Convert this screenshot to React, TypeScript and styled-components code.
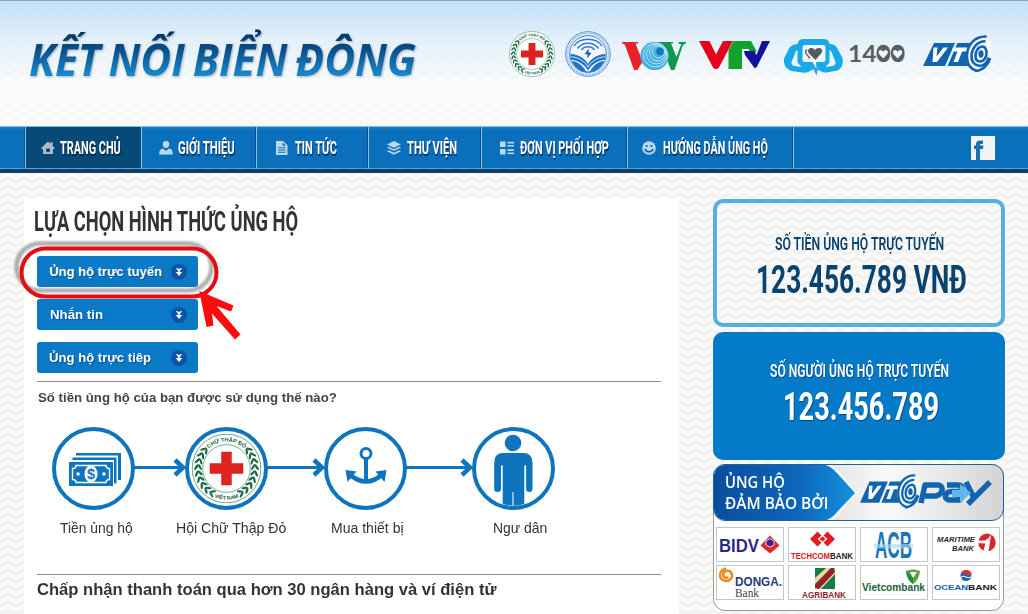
import React, { useLayoutEffect, useRef, useState } from "react";
import styled, { createGlobalStyle, css } from "styled-components";

const GlobalStyle = createGlobalStyle`
  * { box-sizing: border-box; }
  body { margin: 0; background: #f8f8f7; font-family: "Liberation Sans", Arial, sans-serif; color: #333; }
  svg { display: block; flex: none; }
`;

const FitBox = styled.span<{ $w: number; $ml?: number }>`
  display: block;
  flex: none;
  width: ${(p) => p.$w}px;
  margin-left: ${(p) => p.$ml ?? 0}px;
  white-space: nowrap;
`;
const FitInner = styled.span`
  display: inline-block;
  transform-origin: 0 50%;
`;
function Fit({ w, ml, children }: { w: number; ml?: number; children: string }) {
  const ref = useRef<HTMLSpanElement>(null);
  const [k, setK] = useState(1);
  useLayoutEffect(() => {
    if (ref.current) setK(w / ref.current.offsetWidth);
  }, [w]);
  return (
    <FitBox $w={w} $ml={ml}>
      <FitInner ref={ref} style={{ transform: `scaleX(${k})` }}>{children}</FitInner>
    </FitBox>
  );
}

const display = css`
  font-family: Roboto, "Liberation Sans", sans-serif;
  font-weight: 700;
`;

/* ---------- page ---------- */
const Page = styled.div`
  position: relative;
  width: 1028px;
  height: 614px;
  overflow: hidden;
  background: #f9f9f8;
`;
const Waves = styled.svg`
  position: absolute;
  inset: 0;
`;
const Header = styled.header`
  position: relative;
  height: 126px;
  border-top: 1px solid #8fa3b2;
  background: linear-gradient(rgba(188, 221, 246, 0.9), rgba(222, 239, 251, 0.75) 40px, rgba(250, 252, 254, 0.5) 80px, rgba(255, 255, 255, 0.45));
  display: flex;
`;
const SiteTitle = styled.h1`
  margin: 15px 0 0 29px;
  width: 400px;
  height: 86px;
  font: italic 700 45px/86px "Open Sans", "Noto Sans", sans-serif;
  word-spacing: -3px;
  filter: drop-shadow(1px 1px 1px rgba(60, 80, 100, 0.4));
  ${FitInner} {
    background: linear-gradient(#06305c 14px, #0a4f8c 34px, #1a8fd2 62px);
    -webkit-background-clip: text;
    background-clip: text;
    color: transparent;
  }
`;
const Partners = styled.div`
  display: flex;
  align-items: flex-start;
  padding: 30px 0 0 80px;
`;
const Slot = styled.div<{ $ml: number; $mt: number }>`
  margin: ${(p) => p.$mt}px 0 0 ${(p) => p.$ml}px;
`;

/* ---------- navigation ---------- */
const Nav = styled.nav`
  position: relative;
  height: 47px;
  padding-left: 25px;
  display: flex;
  border-top: 1px solid #7fbce4;
  border-bottom: 4px solid #123f66;
  background: linear-gradient(#1a80c8, #0b70bb 3px, #0b70bb);
  box-shadow: inset 0 -1px 0 #5a9dcd;
`;
const NavItem = styled.a<{ $w: number; $pad: number; $active?: boolean }>`
  width: ${(p) => p.$w}px;
  height: 41px;
  padding-left: ${(p) => p.$pad}px;
  display: flex;
  align-items: center;
  border-left: 1px solid #8cc0e4;
  box-shadow: -1px 0 0 #0b4f87;
  background: ${(p) => (p.$active ? "#074a78" : "transparent")};
  ${display}
  font-size: 18px;
  line-height: 41px;
  color: #fff;
  fill: ${(p) => (p.$active ? "#a3bccd" : "#b9d7ee")};
  text-shadow: 1px 2px 1px rgba(0, 25, 60, 0.75);
`;
const NavEnd = styled.div`
  flex: 1;
  height: 41px;
  border-left: 1px solid #8cc0e4;
  box-shadow: -1px 0 0 #0b4f87;
  padding: 9px 33px 0 0;
  display: flex;
  justify-content: flex-end;
`;
const NavIcon = ({ name }: { name: string }) => (
  <svg width="14" height="14" viewBox="0 0 14 14">
    {name === "home" && (
      <>
        <path d="M0 7.200 7 .600l2.300 2.100V1.200h2.400v3.700L14 7.200l-1 .9h-1V13H2V8.100H1z" />
        <path d="M5.200 7.600h3.600v3.200H5.200z" fill="#16354f" />
      </>
    )}
    {name === "user" && <path d="M7 0a3.200 3.200 0 0 1 3.200 3.400C10.200 5.300 8.900 7 7 7S3.800 5.300 3.800 3.400A3.200 3.200 0 0 1 7 0M.3 13.600C0 9.500 1.500 7.900 4 7.500L7 10l3-2.500c2.500.4 4 2 3.700 6.100z" />}
    {name === "file" && <path fillRule="evenodd" d="M1 0h7l4.500 4.200V14H1zM7.500 1.500v3.200H11zM3 6.300v1h7.500v-1zm0 2.200v1h7.500v-1zm0 2.200v1h7.500v-1z" />}
    {name === "stack" && <path d="M7 0l7 3.400-7 3.400-7-3.400zM0 6.600l1.800-.9L7 8.200l5.200-2.500 1.800.9L7 10.100zM0 10.200l1.800-.9L7 11.800l5.200-2.500 1.800.9L7 13.700z" />}
    {name === "list" && <path d="M0 .5h5.500V6H0zM0 8h5.500v5.500H0zM7.500.8H14v1.600H7.500zm0 3.200H14v1.600H7.500zm0 4.300H14v1.600H7.500zm0 3.200H14v1.600H7.500z" />}
    {name === "smile" && (
      <>
        <circle cx="7" cy="7" r="6.800" />
        <circle cx="4.700" cy="5" r="1.100" fill="#0b5d9f" />
        <circle cx="9.300" cy="5" r="1.100" fill="#0b5d9f" />
        <path d="M3 8c1.200 3.800 6.800 3.800 8 0" fill="none" stroke="#0b5d9f" strokeWidth="1.500" />
      </>
    )}
  </svg>
);
const navItems = [
  { t: "TRANG CHỦ", icon: "home", w: 116, pad: 15, gap: 5, tw: 61 },
  { t: "GIỚI THIỆU", icon: "user", w: 115, pad: 17, gap: 5, tw: 57 },
  { t: "TIN TỨC", icon: "file", w: 112, pad: 18, gap: 6, tw: 42 },
  { t: "THƯ VIỆN", icon: "stack", w: 113, pad: 18, gap: 6, tw: 50 },
  { t: "ĐƠN VỊ PHỐI HỢP", icon: "list", w: 146, pad: 18, gap: 6, tw: 89 },
  { t: "HƯỚNG DẪN ỦNG HỘ", icon: "smile", w: 166, pad: 14, gap: 7, tw: 105 },
];

/* ---------- columns ---------- */
const Body = styled.div`
  position: relative;
  display: flex;
  align-items: flex-start;
  padding: 26px 0 0 24px;
`;
const Main = styled.main`
  position: relative;
  width: 655px;
  height: 415px;
  padding: 0 18px 0 13px;
  background: #fff;
`;
const Heading = styled.h2`
  margin: 0 0 0 -3px;
  padding-top: 3px;
  height: 57px;
  ${display}
  font-size: 27.500px;
  line-height: 40px;
  color: #333;
`;
const Choices = styled.div`
  display: flex;
  flex-direction: column;
  gap: 12px;
`;
const Choice = styled.button`
  width: 161px;
  height: 31px;
  padding: 0 11px 0 12px;
  border: 0;
  border-radius: 3px;
  background: #0a79c6;
  color: #fff;
  font: bold 13px/30px "Liberation Sans", Arial, sans-serif;
  text-shadow: 1px 1px 1px rgba(0, 40, 90, 0.5);
  display: flex;
  align-items: center;
  justify-content: space-between;
`;
const Question = styled.p`
  margin: 8px 0 0;
  padding: 6px 0 0 1px;
  height: 46px;
  border-top: 1px solid #8b8b8b;
  font: bold 13px/20px "Liberation Sans", Arial, sans-serif;
  color: #444;
`;
const Flow = styled.div`
  display: flex;
  padding-left: 15px;
`;
const Labels = styled.div`
  display: flex;
  height: 64px;
  padding: 8px 0 0 23px;
  font-size: 15px;
  line-height: 20px;
  color: #333;
`;
const Accept = styled.h3`
  margin: 0;
  padding-top: 4px;
  border-top: 1px solid #8b8b8b;
  font: bold 16px/21px "Liberation Sans", Arial, sans-serif;
  color: #333;
`;
const Annotation = styled.svg`
  position: absolute;
  left: -14px;
  top: 36px;
`;

const Side = styled.aside`
  width: 292px;
  margin-left: 34px;
`;
const Counter = styled.section<{ $solid?: boolean }>`
  height: 128px;
  display: flex;
  flex-direction: column;
  align-items: center;
  border: 4px solid ${(p) => (p.$solid ? "#047ac8" : "#57afe1")};
  border-radius: 10px;
  background: ${(p) => (p.$solid ? "#047ac8" : "transparent")};
  color: ${(p) => (p.$solid ? "#fff" : "#0a4270")};
  margin-bottom: ${(p) => (p.$solid ? 4 : 5)}px;
  padding-top: ${(p) => (p.$solid ? 25 : 31)}px;
  text-shadow: ${(p) => (p.$solid ? "1px 1px 1px rgba(0,35,80,.6)" : "none")};
  ${display}
`;
const CounterLabel = styled.div`
  font-size: 19px;
  font-weight: 600;
  line-height: 20px;
`;
const CounterValue = styled.div<{ $shift: number }>`
  margin-top: 6px;
  padding-left: ${(p) => p.$shift}px;
  font-size: 38.500px;
  line-height: 40px;
`;
const PayPanel = styled.section`
  width: 291px;
  height: 147px;
  border: 1px solid #999;
  border-radius: 12px;
  background: #fff;
`;
const PayHead = styled.div`
  position: relative;
  margin: -1px;
  height: 57px;
  border: 1px solid #1f5fa3;
  border-radius: 12px;
  overflow: hidden;
  background: linear-gradient(90deg, #e9e9ea 45%, #fafafa 60%, #d4d4d6);
`;
const PayArt = styled.svg`
  position: absolute;
  left: -1px;
  top: -1px;
`;
const PayText = styled.div`
  position: relative;
  padding: 7px 0 0 11px;
  font: 600 16px/21px "Open Sans", "Noto Sans", sans-serif;
  color: #fff;
`;
const Banks = styled.div`
  display: grid;
  grid-template-columns: repeat(4, 68px);
  grid-auto-rows: 35px;
  gap: 3px 4px;
  padding: 7px 0 0 2px;
`;
const BankCell = styled.div`
  border: 1px solid #c6c6c6;
  background: #fff;
`;

/* ---------- drawings ---------- */
function RedCross({ size, id }: { size: number; id: string }) {
  const leaves: number[] = [];
  for (let i = 0; i < 9; i++) {
    const a = 52 + i * 12.500;
    leaves.push(a, 360 - a);
  }
  return (
    <svg width={size} height={size} viewBox="-50 -50 100 100">
      <circle r="49" fill="#fff" stroke="#4d9373" strokeWidth="1.200" />
      <circle r="34" fill="none" stroke="#5b9c7f" strokeWidth="1.200" />
      {leaves.map((a) => (
        <g key={a} transform={`rotate(${a}) translate(0,-40.500)`} fill="#1a6b46">
          <ellipse cx="0" cy="-3" rx="5" ry="1.700" transform={`rotate(${a < 180 ? -35 : 35})`} />
          <ellipse cx="0" cy="3" rx="4.500" ry="1.700" transform={`rotate(${a < 180 ? 30 : -30})`} />
        </g>
      ))}
      <path id={id + "t"} d="M-38.500 0A38.500 38.500 0 0 1 38.500 0" fill="none" />
      <path id={id + "b"} d="M-44.500 0A44.500 44.500 0 0 0 44.500 0" fill="none" />
      <g fill="#14603c" fontFamily="Liberation Sans, sans-serif" fontWeight="700" textAnchor="middle">
        <text fontSize="8"><textPath href={`#${id}t`} startOffset="50%">CHỮ THẬP ĐỎ</textPath></text>
        <text fontSize="7.500"><textPath href={`#${id}b`} startOffset="50%">VIỆT NAM</textPath></text>
      </g>
      <path d="M-7.500 -24h15v16.500h16.500v15H7.500V24h-15V7.500H-24v-15H-7.500z" fill="#dd231d" />
    </svg>
  );
}
const Ministry = () => (
  <svg width="46" height="46" viewBox="0 0 46 46">
    <circle cx="23" cy="23" r="22.300" fill="#e8f3fc" stroke="#3f87cf" strokeWidth="0.900" />
    <circle cx="23" cy="23" r="20.500" fill="none" stroke="#86b5e4" strokeWidth="1.600" strokeDasharray="1.400 1" />
    <circle cx="23" cy="23" r="18.300" fill="#f2f8fd" stroke="#2d77c6" strokeWidth="0.900" />
    <g fill="none" stroke="#2d7ccc" strokeWidth="1.500">
      <path d="M9 15C15 6 31 6 37 15M12.500 17.500C17 10.500 29 10.500 33.500 17.500M16.500 19C19 14.500 27 14.500 29.500 19" />
    </g>
    <path d="M24 17.500l-4.500 5.500 3 .5-.5 4 4.500-5.500-3-.8z" fill="#1d62bb" />
    <path d="M5.500 23C14 23.500 20.500 28 23 33c2.500-5 9-9.500 17.500-10v5.500C33 29 26 34 23 39.500c-3-5.500-10-10.500-17.500-11zM7 30c6 .5 11 4.500 14 10.500h4C28 34.500 33 30.500 39 30c-2 6-8 11.500-16 11.500S9 36 7 30z" fill="#1f74c9" />
    <path d="M6 25.800C14 26.300 20.500 31 23 36c2.500-5 9-9.700 17-10.200" stroke="#e4f1fb" fill="none" strokeWidth="0.900" />
  </svg>
);
const Vov = () => (
  <svg width="64" height="28" viewBox="0 0 64 28">
    <path d="M0 0h16v1.500h-2.500L19 15.500 24 4v10l-8.500 14H12L3 3Q2.300 1.500 0 1.500z" fill="#e8222b" />
    <path d="M36 0h15v1.500h-2L54.500 15l4.500-12q.3-1.500-2.500-1.500V0H64v1.500q-2.300.3-3.200 2L52.500 28H49L39 3Q38.500 1.500 36 1.500z" fill="#0e9a4a" />
    <circle cx="32.500" cy="14" r="14.200" fill="#46b1e1" />
    <g fill="none" stroke="#b5e2f6" strokeWidth="1">
      <circle cx="33.500" cy="13" r="12" /><circle cx="34.500" cy="12" r="10" /><circle cx="35.500" cy="11" r="8" /><circle cx="36.500" cy="10" r="6" />
    </g>
    <circle cx="38" cy="9.500" r="3.800" fill="#1579bd" />
  </svg>
);
const Vtv = () => (
  <svg width="71" height="28" viewBox="0 0 71 28">
    <path d="M0 0h10.500l6.500 13.500L24 0h10L20 26.500q-3 3-6 0z" fill="#e3061a" />
    <path d="M34.500 0H52l5.500 10-4 6L49.500 8H43v20H29.500V9z" fill="#14a02c" />
    <path d="M49.500 10h5.500l2.500 4L63 0h8L57.500 26.500l-2 .5L46 14l-1-4z" fill="#14129b" />
  </svg>
);
const Hotline = () => (
  <svg width="121" height="38" viewBox="0 0 121 38">
    <path d="M20 1h19q6 0 6.500 5 6 0 8 4.500l5 9.500q1.500 9-5 12.500l-11 2q-4 .5-7-2L33.500 32 32.500 38l-3-7q-6 4.500-11 3.500l-11-1.500Q-.5 30-.3 21L5 10.500Q7 6.500 13.500 6 14 1 20 1z" fill="#18a9e8" />
    <path d="M7.500 24L12 13q1-1 1.500-.5v12l4 4.500-7-1q-3.500-1-3-4zM51.500 24L47 13q-1-1-1.500-.5v12l-4 4.500 7-1q3.500-1 3-4z" fill="#e9f5fc" />
    <path d="M21 7h18q2.500 0 2.500 2.500v12q0 2.500-2.500 2.500h-7l.5 7-4-7H21q-2.500 0-2.500-2.500v-12Q18.500 7 21 7z" fill="#eef7fd" />
    <path d="M31.500 22l-7-7q-1.500-4 2-5 3-.5 4.500 2 1.500-2.500 5-2 3.500 1.500 1.500 5z" fill="#555b61" />
    <path d="M26 20.500l-4-5q-1-2.500 1-4" stroke="#555b61" strokeWidth="1.300" fill="none" />
    <text x="64" y="23.500" fontFamily="Lato, Open Sans, sans-serif" fontWeight="700" fontSize="23.500" textLength="57" lengthAdjust="spacingAndGlyphs" fill="#5c5e63">1400</text>
    <g fill="#5c5e63"><ellipse cx="99.200" cy="15.200" rx="6.700" ry="8.500" /><ellipse cx="113.600" cy="15.200" rx="6.700" ry="8.500" /></g>
    <path id="h" d="M99.200 20.500l-4.200-4.500q-1.300-3.500 1.500-4 1.900 0 2.700 1.700.8-1.700 2.700-1.700 2.800.5 1.500 4zM113.600 20.500l-4.200-4.500q-1.300-3.500 1.500-4 1.900 0 2.700 1.700.8-1.700 2.700-1.700 2.800.5 1.500 4z" fill="#eef6fc" />
  </svg>
);
const VtcMark = () => (
  <g>
    <path d="M11 8h21L22 31H0z" fill="#1264b0" />
    <path d="M34.500 8h18l-7 23H24.500z" fill="#1264b0" />
    <path d="M10.500 12.500h4l-1 9 7-9h4.500L14 27H9.500zM30 12.500h16l-1.500 4h-5.500L35 27h-4.500l4-10.500H29z" fill="#fff" />
    <ellipse cx="57" cy="19" rx="13.500" ry="17" fill="#f4f8fb" transform="rotate(20 57 19)" />
    <g fill="none" stroke="#1264b0" strokeWidth="2.600">
      <path d="M63.500 1.500C51 1 43.500 11 44 22c.3 8 4 12 9 13.500" />
      <path d="M62.500 6.300c-8.500 0-14 7-14 15.200 0 6 4 9.500 8.500 9.200" />
      <path d="M60 11.500c-4.500 0-7.500 4.500-7.500 9 0 4 2 6 4.500 6 4 0 7-5 6.500-9-.3-3.500-1.500-5.500-3.500-6z" />
      <path d="M52 36c7.500-.5 13.500-6 15-13M57 31c4.500-.5 8-4.500 8.500-8.500" />
    </g>
    <ellipse cx="58" cy="19" rx="2.600" ry="3.700" fill="#1264b0" />
  </g>
);

const Blue = "#0e74bd";
const Ring = ({ children }: { children: React.ReactNode }) => (
  <svg width="83" height="83" viewBox="0 0 83 83" fill={Blue}>
    <circle cx="41.500" cy="41.500" r="39.500" fill="#fff" stroke={Blue} strokeWidth="4" />
    {children}
  </svg>
);
const Connector = ({ w }: { w: number }) => (
  <svg width={w} height="83" viewBox={`0 0 ${w} 83`} overflow="visible">
    <path d={`M-1 40.500H${w - 2}`} stroke={Blue} strokeWidth="3" />
    <path d={`M${w - 10} 33l8 7.500-8 7.500`} fill="none" stroke={Blue} strokeWidth="4.500" />
  </svg>
);
const Money = () => (
  <g>
    <path d="M24 26h45v27h-3V28.500H24zM20.500 30.500h44v26h-2.500V33H20.500z" />
    <path d="M17 35h44v24H17z" />
    <path d="M24 38.500h30q0 3 3.500 3v11q-3.500 0-3.500 3H24q0-3-3.500-3v-11q3.500 0 3.500-3z" fill="none" stroke="#fff" strokeWidth="1.400" />
    <circle cx="26" cy="47" r="1.800" fill="#fff" /><circle cx="52" cy="47" r="1.800" fill="#fff" />
    <ellipse cx="39" cy="47" rx="6.500" ry="8.500" fill="#fff" />
    <text x="39" y="52" textAnchor="middle" fontFamily="Liberation Sans, sans-serif" fontWeight="700" fontSize="14.500">$</text>
  </g>
);
const Anchor = () => (
  <g>
    <circle cx="42" cy="26.500" r="5" fill="none" stroke={Blue} strokeWidth="3" />
    <path d="M40 31h4V53h-4z" />
    <path d="M25 47q17 15 34 0" fill="none" stroke={Blue} strokeWidth="4.500" />
    <path d="M21.500 43l11 1.500-9 10.500zM62.500 43l-11 1.500 9 10.500z" />
  </g>
);
const Person = () => (
  <g>
    <circle cx="41" cy="16" r="8.300" />
    <path d="M31 26h20q9.500 0 9.500 9.500V62q0 3-3.200 3t-3.200-3V38.500h-1.800V77q-5.300 1.500-10.800 1.700V65h-1v13.700Q35.500 78.500 30.700 77V38.500H29V62q0 3-3.500 3t-3.300-3V35.500Q22.200 26 31 26z" />
  </g>
);
const Chevron = () => (
  <svg width="16" height="16" viewBox="0 0 16 16">
    <circle cx="8" cy="8" r="8" fill="#0b55a9" />
    <path d="M4.800 4.200h2L8 5.200l1.200-1h2L8 7.700zM4.800 8h2V7.500h2.400V8h2L8 12z" fill="#fff" />
  </svg>
);

const bt = (t: string, x: number, y: number, w: number, s: number, fill: string, extra: object = {}) => (
  <text x={x} y={y} textLength={w} lengthAdjust="spacingAndGlyphs" fontSize={s} fill={fill} fontWeight="700" fontFamily="Liberation Sans, sans-serif" {...extra}>{t}</text>
);
const banks: React.ReactNode[] = [
  <>{bt("BIDV", 2, 24, 40, 18.500, "#2b2a8c")}<path d="M53 7.500l9.500 10-9.500 8.500-9.500-8.500z" fill="#e5242c" /><path d="M53 10.500l4 2.500v4l-4 2-4-2v-4z" fill="#2b2a8c" stroke="#fff" strokeWidth="0.800" /><path d="M44 19l9 7 9-7" fill="none" stroke="#fff" /></>,
  <><path d="M21 11l7.500-7.500L36 11l-7.500 7.500zM31 11l7.500-7.500L46 11l-7.500 7.500z" fill="#e11b22" /><path d="M33.500 7.500l4 3.500-4 3.500-4-3.500z" fill="#e11b22" stroke="#fff" strokeWidth="1.300" />{bt("TECHCOM", 2, 31, 39, 8.500, "#d71920")}{bt("BANK", 41, 31, 23, 8.500, "#222")}</>,
  <>{bt("ACB", 14, 30, 37, 37, "#1976bb")}<path d="M13 16h39v4.500H13z" fill="#a9d6f0" opacity=".6" /></>,
  <>{bt("MARITIME", 4, 14, 38, 8, "#2b2b2b", { fontStyle: "italic" })}{bt("BANK", 19, 22.500, 22, 8, "#2b2b2b", { fontStyle: "italic" })}<ellipse cx="54" cy="14.500" rx="8.700" ry="9" fill="#d9252b" /><path d="M44 12.500h8q4-2 6-6L55.500 24H50l2.500-8.500-9-.5z" fill="#fff" /></>,
  <><path d="M9 2.500c-7 2-8 10-2 12s10-4 7-8-9.500 0-7.500 3.500 4.500 1 4.500 1" fill="none" stroke="#ef8b22" strokeWidth="2.600" />{bt("DONGA.", 18, 20, 47, 12, "#263b82")}{bt("Bank", 18, 31, 24, 11.500, "#444", { fontFamily: "Liberation Serif, serif", fontWeight: 400 })}</>,
  <><path d="M26 2h20v21H26z" fill="#167c45" /><path d="M26 23L46 2v6L32 23zM26 12L37 2h5L26 18z" fill="#f1d9a0" /><path d="M29 20L43 5" stroke="#97202e" strokeWidth="5.500" strokeLinecap="round" />{bt("AGRIBANK", 13, 31.500, 44, 8.500, "#97202e")}</>,
  <><path d="M45 5q7-3 14 0-1 9-7 13-6-4-7-13z" fill="#5aa23c" /><path d="M49 6l3 6 4-6z" fill="#fff" /><path d="M45 5l7 7v6q-6-4-7-13z" fill="#23893f" />{bt("Vietcombank", 1, 25, 63, 11, "#15633a")}</>,
  <><circle cx="33" cy="9.500" r="5.500" fill="#1c65ae" /><path d="M27.600 9q3-3 6-.5t5-.5q-1-4-5.500-4t-5.500 5z" fill="#e1303a" /><path d="M28 11q3-1.500 5 0t5 0" stroke="#fff" fill="none" />{bt("OCEAN", 1, 24, 34, 8, "#1262ae")}{bt("BANK", 35, 24, 29, 8, "#1a1a1a")}</>,
];

export default function App() {
  return (
    <Page>
      <GlobalStyle />
      <Waves width="1028" height="614">
        <defs>
          <pattern id="wave" width="16" height="8" patternUnits="userSpaceOnUse">
            <path d="M-4 4L0 6 8 2 16 6 20 4" fill="none" stroke="#f0f0ee" strokeWidth="2.400" strokeLinejoin="round" />
          </pattern>
        </defs>
        <rect width="1028" height="614" fill="url(#wave)" />
      </Waves>

      <Header>
        <SiteTitle><Fit w={387}>KẾT NỐI BIỂN ĐÔNG</Fit></SiteTitle>
        <Partners>
          <Slot $ml={0} $mt={0}><RedCross size={46} id="hd" /></Slot>
          <Slot $ml={10} $mt={0}><Ministry /></Slot>
          <Slot $ml={11} $mt={11}><Vov /></Slot>
          <Slot $ml={13} $mt={10}><Vtv /></Slot>
          <Slot $ml={14} $mt={7}><Hotline /></Slot>
          <Slot $ml={18} $mt={4}>
            <svg width="68" height="38" viewBox="0 0 68 38"><VtcMark /></svg>
          </Slot>
        </Partners>
      </Header>

      <Nav>
        {navItems.map((n, i) => (
          <NavItem key={n.t} $w={n.w} $pad={n.pad} $active={i === 0}>
            <NavIcon name={n.icon} />
            <Fit w={n.tw} ml={n.gap}>{n.t}</Fit>
          </NavItem>
        ))}
        <NavEnd>
          <svg width="24" height="24" viewBox="0 0 24 24">
            <path d="M0 0h24v24H0z" fill="#f1f4f7" />
            <path d="M5 24V13H3V9.500h2V8q0-3.500 4-3.500h3V8H10.500Q9 8 9 9v.5h3.500L12 13H9v11z" fill="#1a6fb5" />
          </svg>
        </NavEnd>
      </Nav>

      <Body>
        <Main>
          <Heading><Fit w={264}>LỰA CHỌN HÌNH THỨC ỦNG HỘ</Fit></Heading>
          <Choices>
            <Choice><Fit w={113}>Ủng hộ trực tuyến</Fit><Chevron /></Choice>
            <Choice><Fit w={53}>Nhắn tin</Fit><Chevron /></Choice>
            <Choice><Fit w={102}>Ủng hộ trực tiêp</Fit><Chevron /></Choice>
          </Choices>
          <Question><Fit w={299}>Số tiền ủng hộ của bạn được sử dụng thế nào?</Fit></Question>
          <Flow>
            <Ring><Money /></Ring>
            <Connector w={50} />
            <Ring><g transform="translate(6.500 6.500)"><RedCross size={70} id="fl" /></g></Ring>
            <Connector w={56} />
            <Ring><Anchor /></Ring>
            <Connector w={65} />
            <Ring><Person /></Ring>
          </Flow>
          <Labels>
            <Fit w={73}>Tiền ủng hộ</Fit>
            <Fit w={110} ml={43}>Hội Chữ Thập Đỏ</Fit>
            <Fit w={73} ml={45}>Mua thiết bị</Fit>
            <Fit w={54} ml={89}>Ngư dân</Fit>
          </Labels>
          <Accept><Fit w={459}>Chấp nhận thanh toán qua hơn 30 ngân hàng và ví điện tử</Fit></Accept>
          <Annotation width="240" height="110" viewBox="10 235 240 110">
            <defs><filter id="soft" x="-10%" y="-20%" width="120%" height="140%"><feGaussianBlur stdDeviation="1.300" /></filter></defs>
            <rect x="16.500" y="243.500" width="195" height="47" rx="23.500" fill="none" stroke="#777" strokeOpacity=".6" strokeWidth="4.500" filter="url(#soft)" />
            <rect x="21.500" y="248.500" width="195" height="48" rx="24" fill="none" stroke="#e30d12" strokeWidth="4" />
            <path d="M199.300 291L233.500 305.500 231 311.500 216.500 306 240.500 334.500 235 339.500 212 313.500 213.500 325.500 206.500 327z" fill="#fb0d0d" />
          </Annotation>
        </Main>

        <Side>
          <Counter>
            <CounterLabel><Fit w={169}>SỐ TIỀN ỦNG HỘ TRỰC TUYẾN</Fit></CounterLabel>
            <CounterValue $shift={4}><Fit w={211}>123.456.789 VNĐ</Fit></CounterValue>
          </Counter>
          <Counter $solid>
            <CounterLabel><Fit w={179}>SỐ NGƯỜI ỦNG HỘ TRỰC TUYẾN</Fit></CounterLabel>
            <CounterValue $shift={3}><Fit w={156}>123.456.789</Fit></CounterValue>
          </Counter>
          <PayPanel>
            <PayHead>
              <PayArt width="291" height="57" viewBox="0 0 291 57">
                <defs>
                  <linearGradient id="pb" x2="1" y2="0"><stop offset="0" stopColor="#0b4d9c" /><stop offset=".6" stopColor="#0e66ba" /><stop offset="1" stopColor="#1391dc" /></linearGradient>
                </defs>
                <path d="M0 0h112q9 1 16 9l16 20-16 19q-7 9-16 9H0z" fill="#f7fafc" />
                <path d="M0 0h108q9 1 16 9l18 20-18 19q-7 9-16 9H0z" fill="url(#pb)" />
                <g transform="translate(147 10) scale(.87 .93)"><VtcMark /></g>
                <g fill="none" stroke="#1264b0" strokeWidth="5.500" strokeLinejoin="round">
                  <path d="M208 39l4-18h13q5 1 4 5.500t-6 5.500h-11" />
                  <path d="M234 21h11q5 0 4 5l-2 10h-11q-4-1-3.500-4.500t5.500-4h9" />
                  <path d="M253 18l8 16M277 18l-22 22" />
                </g>
                <path d="M239 26h8v-6l11 9-11 10v-6h-8z" fill="#5fb8e8" />
              </PayArt>
              <PayText>
                <Fit w={60}>ỦNG HỘ</Fit>
                <Fit w={103}>ĐẢM BẢO BỞI</Fit>
              </PayText>
            </PayHead>
            <Banks>
              {banks.map((b, i) => (
                <BankCell key={i}><svg width="66" height="33" viewBox="0 0 66 33" overflow="visible">{b}</svg></BankCell>
              ))}
            </Banks>
          </PayPanel>
        </Side>
      </Body>
    </Page>
  );
}
